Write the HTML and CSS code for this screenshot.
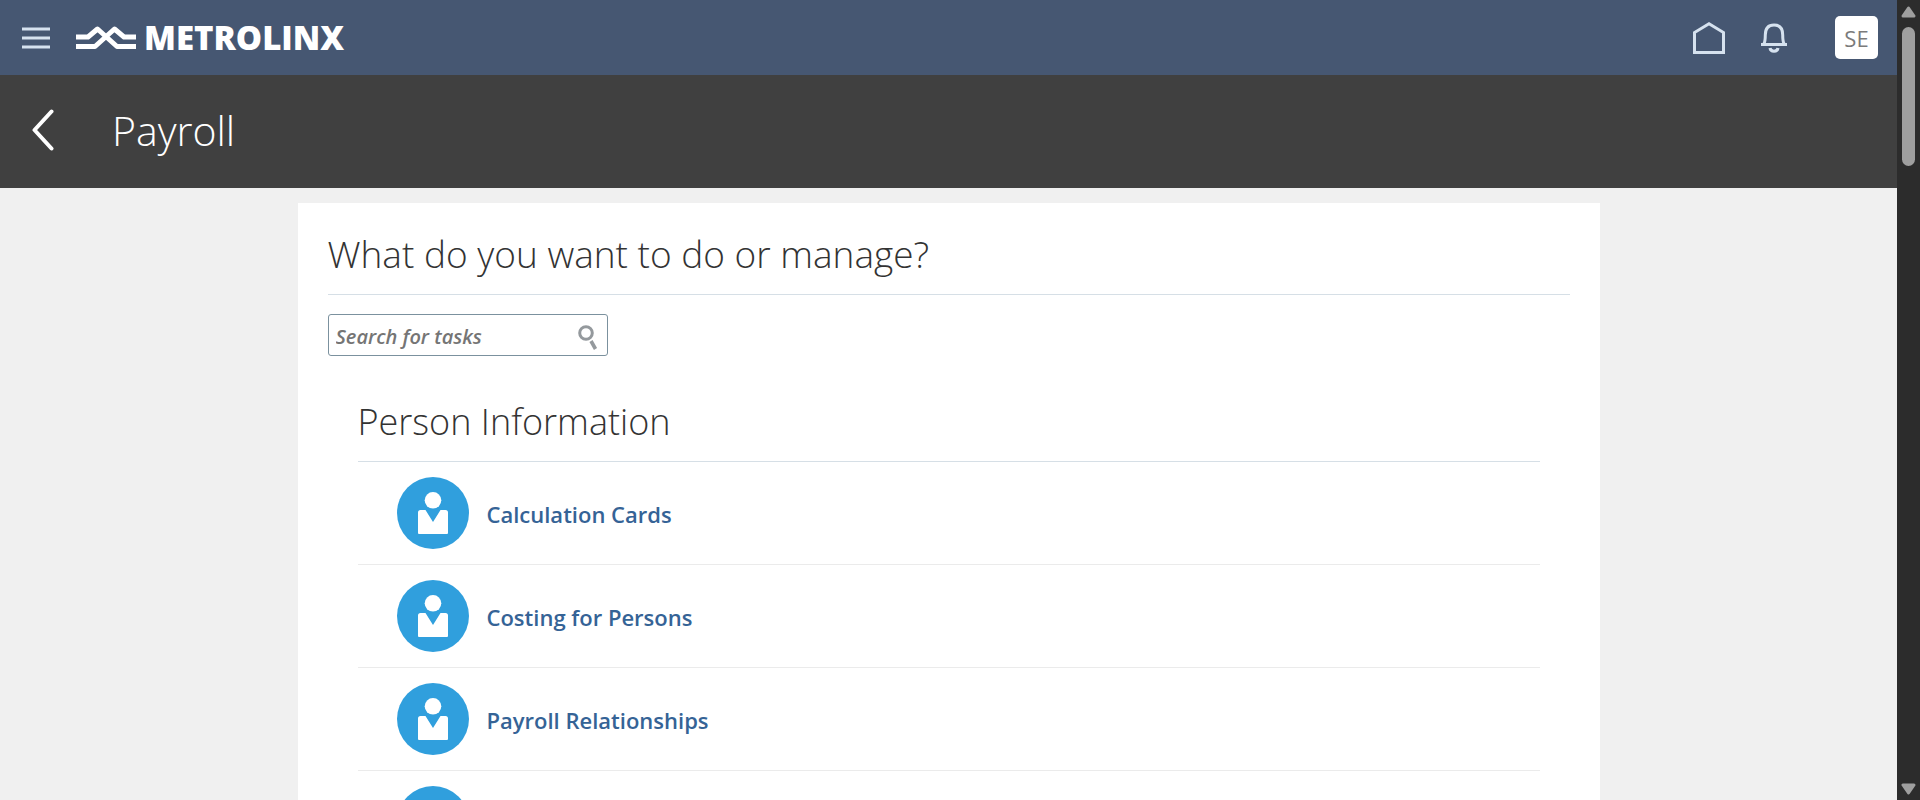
FILE: index.html
```html
<!DOCTYPE html>
<html lang="en">
<head>
<meta charset="utf-8">
<title>Payroll</title>
<link rel="stylesheet" href="styles.css">
</head>
<body>
<svg class="defs" aria-hidden="true">
  <symbol id="person" viewBox="0 0 72 72">
    <circle cx="36" cy="36" r="36" fill="#309fdd"/>
    <circle cx="36" cy="23.300" r="8.300" fill="#fff"/>
    <path d="M23.500 33h5L36 45l7.500-12h5Q51 33 51 35.500V56a1 1 0 0 1-1 1H22a1 1 0 0 1-1-1V35.500Q21 33 23.500 33z" fill="#fff"/>
  </symbol>
</svg>
<div class="page">
  <header class="topbar">
    <button class="icon-button" type="button" aria-label="Navigator">
      <svg width="28" height="22" viewBox="0 0 28 22"><path d="M0 2h28M0 11h28M0 20h28" stroke="#d6e2ef" stroke-width="3"/></svg>
    </button>
    <a class="logo" href="#">
      <svg width="60" height="24" viewBox="0 0 60 24" fill="none" stroke="#fff" stroke-width="5"><path d="M0 11h12L21.500 3 41 20.500h19M0 20.500h19L38.500 3 48 11h12" stroke-linejoin="round"/></svg>
      <span class="logo-text">METROLINX</span>
    </a>
    <nav class="tools" aria-label="Global">
      <a class="tool" href="#" aria-label="Home">
        <svg width="32" height="32" viewBox="0 0 32 32"><path d="M1.500 30.500V10.500L16 1.800l14.500 8.700v20z" fill="none" stroke="#d6e2ef" stroke-width="3"/></svg>
      </a>
      <button class="icon-button" type="button" aria-label="Notifications">
        <svg width="26" height="30" viewBox="0 0 26 30" fill="none" stroke="#d6e2ef" stroke-width="3"><path d="M0 21.500h26" /><path d="M2.800 21c1.500-2.500 1.500-5 1.500-9C4.300 5.500 7.500 2 13 2s8.700 3.500 8.700 10c0 4 0 6.500 1.500 9"/><path d="M9 25c.5 4.200 7.500 4.200 8 0"/></svg>
      </button>
      <button class="avatar" type="button">SE</button>
    </nav>
  </header>
  <div class="titlebar">
    <a class="back" href="#" aria-label="Back">
      <svg width="22" height="42" viewBox="0 0 22 42"><path d="M19.500 2.500 2.500 21l17 18.500" fill="none" stroke="#fff" stroke-width="4" stroke-linecap="round" stroke-linejoin="round"/></svg>
    </a>
    <h1 class="title">Payroll</h1>
  </div>
  <main class="panel">
    <h2 class="heading">What do you want to do or manage?</h2>
    <form class="search">
      <input class="search-input" type="text" placeholder="Search for tasks" aria-label="Search for tasks">
      <button class="search-button" type="button" aria-label="Search">
        <svg width="20" height="25" viewBox="0 0 20 25" fill="none" stroke="#94999d"><circle cx="8" cy="8" r="6.300" stroke-width="3"/><path d="M13 16l4.500 8" stroke-width="3.600"/></svg>
      </button>
    </form>
    <section class="group">
      <h3 class="heading subheading">Person Information</h3>
      <ul class="tasks">
        <li class="task"><svg class="task-icon"><use href="#person"/></svg><a class="task-link" href="#">Calculation Cards</a></li>
        <li class="task"><svg class="task-icon"><use href="#person"/></svg><a class="task-link" href="#">Costing for Persons</a></li>
        <li class="task"><svg class="task-icon"><use href="#person"/></svg><a class="task-link" href="#">Payroll Relationships</a></li>
        <li class="task"><svg class="task-icon"><use href="#person"/></svg></li>
      </ul>
    </section>
  </main>
</div>
<div class="scrollbar" aria-hidden="true">
  <svg width="15" height="12" viewBox="0 0 15 12"><path d="M7.500 2 13 10H2z" fill="#9f9f9f" stroke="#9f9f9f" stroke-width="3" stroke-linejoin="round"/></svg>
  <div class="track"><div class="thumb"></div></div>
  <svg width="15" height="12" viewBox="0 0 15 12"><path d="M7.500 10 2 2h11z" fill="#9f9f9f" stroke="#9f9f9f" stroke-width="3" stroke-linejoin="round"/></svg>
</div>
</body>
</html>
```
FILE: styles.css
```css
* { box-sizing: border-box; }

body {
  margin: 0;
  height: 100vh;
  display: grid;
  grid-template-columns: 1fr 23px;
  overflow: hidden;
  background: #f0f0f0;
  font-family: "Open Sans", "Noto Sans", sans-serif;
  color: #333;
}

h1, h2, h3, ul { margin: 0; padding: 0; font-weight: 300; }
button { border: 0; padding: 0; background: none; font: inherit; cursor: pointer; }
a { text-decoration: none; }
svg { display: block; flex: none; }
.defs { position: absolute; width: 0; height: 0; }

.page { min-width: 0; height: 100vh; overflow-y: auto; scrollbar-width: none; }

.topbar {
  display: flex;
  align-items: center;
  height: 75px;
  padding: 0 19px 0 22px;
  background: #465772;
}
.logo { display: flex; align-items: center; gap: 8px; margin-left: 26px; color: #fff; }
.logo-text { font: 800 33px/40px "Open Sans", sans-serif; }
.tools { display: flex; align-items: center; margin-left: auto; gap: 36px; }
.avatar {
  width: 43px;
  height: 43px;
  margin-left: 12px;
  border-radius: 5px;
  background: #fff;
  color: #7b7b7b;
  font-size: 22px;
}

.titlebar {
  display: flex;
  align-items: center;
  gap: 58px;
  height: 113px;
  padding: 0 32px 3px;
  background: #404040;
}
.title { color: #fff; font-size: 41px; line-height: 60px; }

.panel {
  max-width: 1302px;
  margin: 15px auto 0;
  padding: 23px 30px;
  background: #fff;
}
.heading {
  padding-bottom: 12px;
  border-bottom: 1px solid #d6dfe6;
  font-size: 37px;
  line-height: 56px;
}
.subheading { padding-bottom: 11px; font-size: 36px; }

.search {
  display: flex;
  align-items: center;
  width: 280px;
  height: 42px;
  margin-top: 19px;
  padding: 0 9px 0 7px;
  border: 1px solid #7b919e;
  border-radius: 3px;
}
.search-input {
  flex: 1;
  min-width: 0;
  padding: 4px 0 0;
  border: 0;
  outline: 0;
  background: none;
  font: italic 600 20px/28px "Open Sans", sans-serif;
}
.search-input::placeholder { color: #757575; opacity: 1; }
.search-button { padding-top: 4px; }

.group { margin: 38px 30px 0; }
.tasks { list-style: none; }
.task {
  display: flex;
  align-items: center;
  gap: 18px;
  height: 103px;
  padding-left: 39px;
  border-bottom: 1px solid #ebebeb;
}
.task-icon { width: 72px; height: 72px; }
.task-link { padding-top: 2px; color: #356396; font-size: 22px; font-weight: 600; line-height: 32px; }

.scrollbar {
  display: flex;
  flex-direction: column;
  align-items: center;
  padding: 6px 0 5px;
  background: #2c2c2c;
}
.track { flex: 1; padding-top: 9px; }
.thumb { width: 13px; height: 139px; border-radius: 7px; background: #9f9f9f; }
```
